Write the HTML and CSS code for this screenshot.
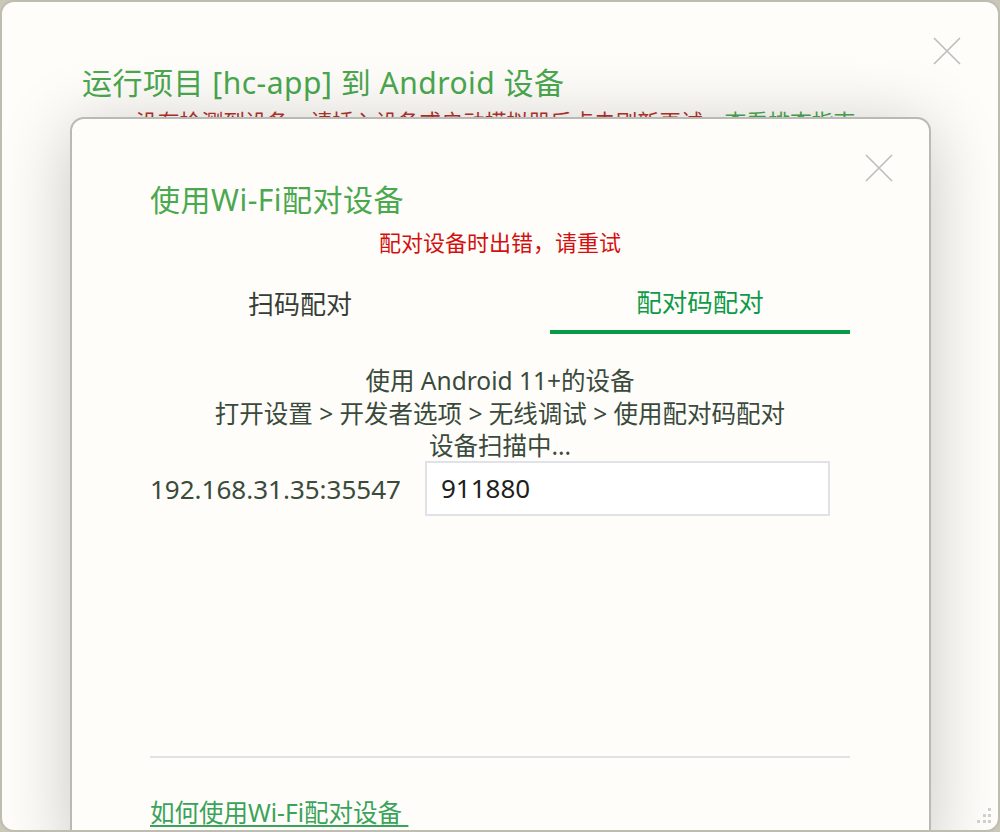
FILE: index.html
```html
<!DOCTYPE html>
<html lang="zh-CN">
<head>
<meta charset="utf-8">
<title>运行项目</title>
<link rel="stylesheet" href="styles.css">
</head>
<body>
<div class="outer">
  <div class="outer-head">
    <h1 class="outer-title">运行项目 [hc-app] 到 Android 设备</h1>
    <p class="notice">没有检测到设备，请插入设备或启动模拟器后点击刷新再试，<span class="notice-link">查看排查指南</span></p>
  </div>
  <button class="close close-outer" aria-label="关闭">
    <svg viewBox="0 0 28 28" width="28" height="28"><path d="M1 1L27 27M27 1L1 27" stroke="#bdbdbd" stroke-width="1.6" fill="none"/></svg>
  </button>

  <div class="modal">
    <button class="close close-inner" aria-label="关闭">
      <svg viewBox="0 0 28 28" width="28" height="28"><path d="M1 1L27 27M27 1L1 27" stroke="#bdbdbd" stroke-width="1.6" fill="none"/></svg>
    </button>
    <h2 class="modal-title">使用Wi-Fi配对设备</h2>
    <p class="error">配对设备时出错，请重试</p>
    <div class="tabs">
      <div class="tab">扫码配对</div>
      <div class="tab active">配对码配对</div>
    </div>
    <div class="desc">
      <p>使用 Android 11+的设备</p>
      <p>打开设置 &gt; 开发者选项 &gt; 无线调试 &gt; 使用配对码配对</p>
      <p>设备扫描中...</p>
    </div>
    <div class="pair-row">
      <span class="addr">192.168.31.35:35547</span>
      <div class="code-input">911880</div>
    </div>
    <div class="divider"></div>
    <a class="help" href="#">如何使用Wi-Fi配对设备 </a>
  </div>

  <div class="grip">
    <i class="g1"></i>
    <i class="g2"></i><i class="g3"></i>
    <i class="g4"></i><i class="g5"></i><i class="g6"></i>
  </div>
</div>
</body>
</html>
```

FILE: styles.css
```css
* { box-sizing: border-box; }
html, body {
  margin: 0;
  padding: 0;
  width: 1000px;
  height: 832px;
  overflow: hidden;
  background: #c9c7b8;
  font-family: "Noto Sans", "Noto Sans CJK SC", sans-serif;
}
p, h1, h2 { margin: 0; font-weight: normal; }

.outer {
  position: relative;
  width: 1000px;
  height: 832px;
  border: 2px solid #bebdb1;
  border-radius: 14px;
  background: #fefdf9;
  overflow: hidden;
}
.outer-head {
  padding: 61px 0 0 80px;
}
.outer-title {
  font-size: 30px;
  line-height: 40px;
  letter-spacing: 0.5px;
  color: #4aa84e;
}
.notice {
  margin-top: 4px;
  padding-left: 54px;
  font-size: 21.8px;
  line-height: 30px;
  color: #b8322c;
  white-space: nowrap;
}
.notice-link { color: #4aa84e; }

.close {
  position: absolute;
  border: 0;
  background: transparent;
  padding: 0;
  width: 28px;
  height: 28px;
  cursor: pointer;
}
.close svg { display: block; }
.close-outer { top: 35px; right: 37px; }
.close-inner { top: 35px; right: 36px; }

.modal {
  position: absolute;
  left: 68px;
  top: 115px;
  width: 861px;
  height: 740px;
  background: #fefdf9;
  border: 2px solid #b9b9b6;
  border-radius: 14px;
  box-shadow: 0 10px 70px rgba(0, 0, 0, 0.22);
  padding: 0 79px 0 78px;
  display: flex;
  flex-direction: column;
}
.modal-title {
  margin-top: 61px;
  font-size: 30px;
  line-height: 40px;
  letter-spacing: 0.5px;
  color: #4aa84e;
}
.error {
  margin-top: 7px;
  text-align: center;
  font-size: 22px;
  line-height: 30px;
  color: #d40f0f;
}
.tabs {
  margin-top: 29px;
  display: flex;
  justify-content: space-between;
}
.tab {
  width: 300px;
  text-align: center;
  font-size: 26px;
  line-height: 36px;
  padding-top: 0;
  padding-bottom: 8px;
  border-bottom: 4px solid transparent;
  color: #363d36;
}
.tab.active {
  font-size: 25.5px;
  color: #0f9a48;
  border-bottom-color: #079b48;
  line-height: 32px;
  padding-bottom: 12px;
}
.desc {
  margin-top: 31px;
  text-align: center;
  font-size: 24.5px;
  line-height: 32.5px;
  color: #3a4a3c;
}
.pair-row {
  display: flex;
  align-items: center;
  margin-top: -1.5px;
}
.addr {
  width: 275px;
  font-size: 26px;
  color: #3a4a3c;
}
.code-input {
  width: 405px;
  height: 55px;
  border: 2px solid #e1e1e8;
  background: #fff;
  padding-left: 14px;
  font-size: 26px;
  line-height: 51px;
  color: #1e1e1e;
}
.divider {
  margin-top: 240px;
  height: 2px;
  background: #e2e2e2;
}
.help {
  margin-top: 39px;
  align-self: flex-start;
  font-size: 24.5px;
  line-height: 32px;
  color: #3aa35a;
  text-decoration: underline;
  text-underline-offset: 3px;
  white-space: pre;
}

.grip {
  position: absolute;
  right: 6px;
  bottom: 4px;
  width: 16px;
  height: 18px;
}
.grip i {
  position: absolute;
  width: 3px;
  height: 3px;
  background: #cfcfcf;
}
.grip .g1 { right: 1px; top: 0; }
.grip .g2 { right: 6px; top: 6px; }
.grip .g3 { right: 1px; top: 6px; }
.grip .g4 { right: 12px; top: 12px; }
.grip .g5 { right: 6px; top: 12px; }
.grip .g6 { right: 1px; top: 12px; }
```
